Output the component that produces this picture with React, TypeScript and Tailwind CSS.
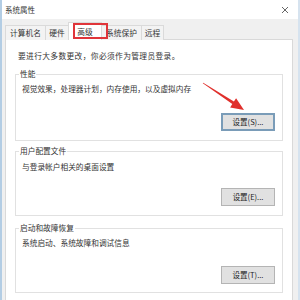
import React from 'react';

interface GroupProps {
  title: string;
  text: string;
  button: string;
  height: string;
  textPad: string;
  buttonGap: string;
  focused?: boolean;
  className?: string;
}

const Group: React.FC<GroupProps> = ({ title, text, button, height, textPad, buttonGap, focused, className }) => (
  <div className={`relative ml-[9px] w-[268px] border border-[#e1e1e1] ${height} ${className ?? ''}`}>
    <span className="absolute left-[3px] -top-[6px] bg-white px-[1px] text-[7.7px] leading-[10px] text-[#333]">{title}</span>
    <p className={`pl-[6px] text-[7.7px] leading-[10px] text-[#333] ${textPad}`}>{text}</p>
    <div className={`flex justify-end pr-[7px] ${buttonGap}`}>
      <button
        className={`w-[54px] h-[18px] bg-[#e1e1e1] text-[7.5px] leading-[10px] text-[#222] ${focused ? 'border-2 border-[#7a9cb8]' : 'border border-[#b4b4b4]'}`}
      >
        {button}
      </button>
    </div>
  </div>
);

const tabs = [
  { label: '计算机名', w: 'w-[41px]' },
  { label: '硬件', w: 'w-[24px]' },
  { label: '高级', w: 'w-[34px]', active: true },
  { label: '系统保护', w: 'w-[41px]' },
  { label: '远程', w: 'w-[23px]' },
];

export default function App() {
  return (
    <div
      className="relative w-[300px] h-[300px] overflow-hidden bg-[#f0f0f0] border-l-2 border-r-2 border-l-[#b3cde4] border-r-[#d6e3ef]"
      style={{ fontFamily: '"Noto Sans CJK SC", "Noto Sans", sans-serif' }}
    >
      {/* title bar */}
      <div className="h-[19px] bg-white flex items-center justify-between pl-[3px] pr-[9px]">
        <span className="text-[7.5px] leading-[10px] text-[#333]">系统属性</span>
        <svg width="8" height="8" viewBox="0 0 8 8" className="text-[#666]">
          <path d="M1 1 L7 7 M7 1 L1 7" stroke="currentColor" strokeWidth="1" />
        </svg>
      </div>

      {/* tabs */}
      <div className="h-[21px] flex items-end pl-[3px]">
        {tabs.map((t) => (
          <div
            key={t.label}
            className={`${t.w} flex items-center justify-center text-[7.7px] leading-[10px] text-[#333] border-t border-x border-[#dadada] -mr-px ${
              t.active ? 'h-[18px] bg-white relative z-10' : 'h-[15px] bg-[#f3f3f3]'
            }`}
          >
            {t.label}
          </div>
        ))}
      </div>

      {/* tab page */}
      <div className="ml-[3px] -mt-px w-[288px] h-[270px] bg-white border border-[#d9d9d9]">
        <p className="pl-[12px] pt-[11px] text-[7.7px] leading-[10px] tracking-[0.4px] text-[#333]">要进行大多数更改，你必须作为管理员登录。</p>

        <Group
          className="mt-[13px]"
          title="性能"
          text="视觉效果，处理器计划，内存使用，以及虚拟内存"
          button="设置(S)..."
          height="h-[67px]"
          textPad="pt-[9px]"
          buttonGap="mt-[19px]"
          focused
        />
        <Group
          className="mt-[10px]"
          title="用户配置文件"
          text="与登录帐户相关的桌面设置"
          button="设置(E)..."
          height="h-[65px]"
          textPad="pt-[10px]"
          buttonGap="mt-[16px]"
        />
        <Group
          className="mt-[12px]"
          title="启动和故障恢复"
          text="系统启动、系统故障和调试信息"
          button="设置(T)..."
          height="h-[65px]"
          textPad="pt-[9px]"
          buttonGap="mt-[18px]"
        />
      </div>

      {/* red annotation box around selected tab */}
      <div className="absolute left-[71px] top-[23px] w-[35px] h-[16px] border-2 border-[#e0353a] z-20" />

      {/* red arrow */}
      <svg className="absolute left-[-2px] top-0 z-20" width="300" height="300" viewBox="0 0 300 300">
        <polygon
          points="203.2,82.8 233.9,101.5 236.1,98.2 244,110 230.1,107.4 232.3,104.1 202.8,83.2"
          fill="#e0302c"
        />
      </svg>
    </div>
  );
}
